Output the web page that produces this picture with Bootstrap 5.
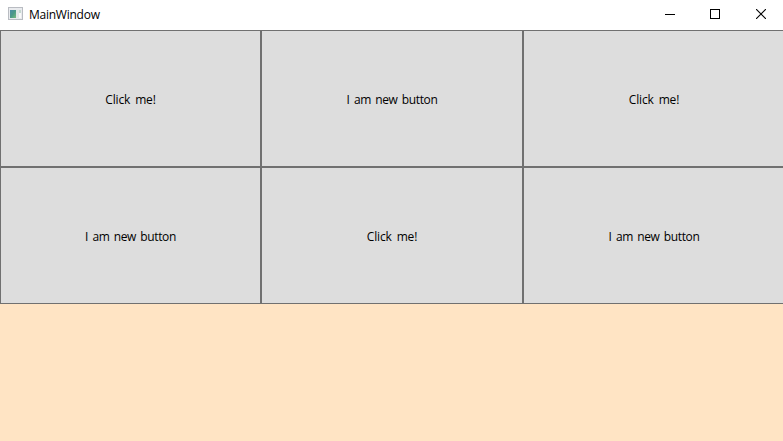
<!DOCTYPE html>
<html lang="en">
<head>
<meta charset="utf-8">
<meta name="viewport" content="width=device-width, initial-scale=1">
<title>MainWindow</title>
<link href="https://cdn.jsdelivr.net/npm/bootstrap@5.3.0/dist/css/bootstrap.min.css" rel="stylesheet">
<style>
body { font: 12px/16px "Open Sans", "Noto Sans", sans-serif; color: #000; background: #ffe4c4; }
.title-bar { height: 30px; padding-left: 8px; }
.app-icon { margin-bottom: 3px; }
.title-text { margin-left: 6px; line-height: 28px; letter-spacing: -.25px; }
.caption-btn { width: 45px; height: 30px; line-height: 0; color: #000; }
.caption-btn svg { margin-bottom: 2px; }
.caption-btn.close-btn { width: 46px; margin-left: 1px; margin-right: -1px; }
.button-grid { display: grid; grid-template-columns: 261px 262px 262px; grid-auto-rows: 137px; }
.tile { background: #ddd; border: 1px solid #707070; font: inherit; color: #000; padding: 3px 0 0; word-spacing: 2px; letter-spacing: -.15px; }
.tile-long { word-spacing: 1.6px; letter-spacing: -.38px; }
</style>
<script src="https://cdn.jsdelivr.net/npm/bootstrap@5.3.0/dist/js/bootstrap.bundle.min.js"></script>
</head>
<body class="vh-100 overflow-hidden">
<header class="title-bar bg-white d-flex align-items-center">
  <svg class="app-icon" width="15" height="13" viewBox="0 0 15 13" shape-rendering="crispEdges" aria-hidden="true">
    <defs><linearGradient id="pane" x1="0" y1="0" x2="1" y2="1"><stop offset="0" stop-color="#4d8ca8"/><stop offset=".5" stop-color="#4c9988"/><stop offset="1" stop-color="#79bd7e"/></linearGradient></defs>
    <path fill="#b9bcc2" d="M0 0h15v13H0z"/>
    <path fill="#e9ebee" d="M1 1h13v11H1z"/>
    <path fill="#fafafa" d="M2 3h11v8H2z"/>
    <path fill="url(#pane)" d="M2 3h6v8H2z"/>
    <path fill="#e4e8e8" d="M8 3h3v8H8z"/>
    <path fill="#c5d8d0" d="M11 3h2v3h-2z"/>
  </svg>
  <span class="title-text me-auto">MainWindow</span>
  <button type="button" class="caption-btn btn border-0 rounded-0 p-0" aria-label="Minimize"><svg width="10" height="10" shape-rendering="crispEdges"><path fill="currentColor" d="M0 5h10v1H0z"/></svg></button>
  <button type="button" class="caption-btn btn border-0 rounded-0 p-0" aria-label="Maximize"><svg width="10" height="10" shape-rendering="crispEdges"><path fill="none" stroke="currentColor" d="M.5.5h9v9h-9z"/></svg></button>
  <button type="button" class="caption-btn close-btn btn border-0 rounded-0 p-0" aria-label="Close"><svg width="10" height="10"><path fill="none" stroke="currentColor" stroke-width="1.1" d="M0 0l10 10M10 0L0 10"/></svg></button>
</header>
<main class="button-grid">
  <button type="button" class="tile">Click me!</button>
  <button type="button" class="tile tile-long">I am new button</button>
  <button type="button" class="tile">Click me!</button>
  <button type="button" class="tile tile-long">I am new button</button>
  <button type="button" class="tile">Click me!</button>
  <button type="button" class="tile tile-long">I am new button</button>
</main>
</body>
</html>
